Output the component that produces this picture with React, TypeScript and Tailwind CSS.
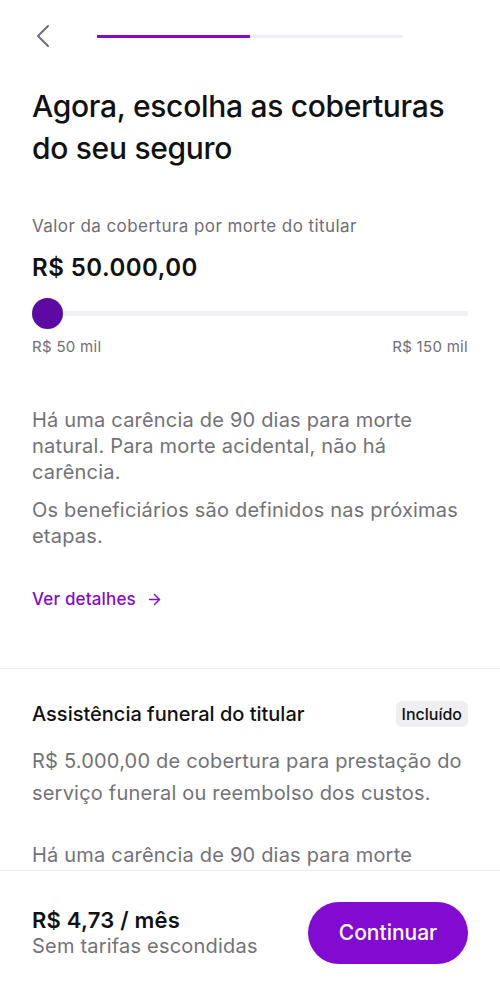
import { ArrowRight, ChevronLeft } from "lucide-react";

const font = { fontFamily: "Inter, 'Noto Sans', sans-serif" };

function Slider() {
  return (
    <div className="relative mt-[15px] h-[31px]">
      <div className="absolute left-[15px] right-0 top-[13px] h-[5px] rounded-full bg-[#f0eff3]" />
      <div className="absolute left-0 top-0 h-[31px] w-[31px] rounded-full bg-[#5c0aa3]" />
    </div>
  );
}

export default function App() {
  return (
    <div className="flex h-[996px] w-[500px] flex-col overflow-hidden bg-white" style={font}>
      <div className="h-[870px] overflow-hidden">
        {/* header */}
        <div className="flex h-[72px] items-center px-[32px]">
          <ChevronLeft className="-ml-[9px] h-[40px] w-[40px] shrink-0 text-[#6e6e78]" strokeWidth={1.2} />
          <div className="ml-[34px] flex h-[3px] w-[306px] bg-[#f1eff5]">
            <div className="h-full w-[153px] bg-[#820ad1]" />
          </div>
        </div>

        <div className="px-[32px]">
          <h1 className="mt-[13px] text-[30px] font-medium leading-[42px] tracking-[-0.01em] text-[#111111]">
            Agora, escolha as coberturas
            <br />
            do seu seguro
          </h1>

          <p className="mt-[45px] text-[17px] leading-[24px] tracking-[0.025em] text-[#6e6e75]">
            Valor da cobertura por morte do titular
          </p>
          <p className="mt-[15px] text-[24px] font-semibold leading-[30px] tracking-[0.02em] text-[#111111]">
            R$ 50.000,00
          </p>

          <Slider />

          <div className="mt-[8px] flex justify-between text-[15px] leading-[20px] tracking-[0.02em] text-[#6e6e75]">
            <span>R$ 50 mil</span>
            <span>R$ 150 mil</span>
          </div>

          <div className="mt-[50px] text-[20px] leading-[26px] tracking-[0.01em] text-[#727278]">
            <p>
              Há uma carência de 90 dias para morte
              <br />
              natural. Para morte acidental, não há
              <br />
              carência.
            </p>
            <p className="mt-[12px]">
              Os beneficiários são definidos nas próximas
              <br />
              etapas.
            </p>
          </div>

          <a className="mt-[38px] flex items-center gap-[10px] text-[17px] font-medium leading-[24px] tracking-[0.01em] text-[#820ad1]">
            Ver detalhes
            <ArrowRight className="h-[17px] w-[17px]" strokeWidth={2} />
          </a>
        </div>

        <div className="mt-[57px] h-px bg-[#eeeef0]" />

        <div className="px-[32px]">
          <div className="mt-[31px] flex h-[28px] items-center justify-between">
            <h2 className="text-[20px] font-medium leading-[28px] text-[#111111]">
              Assistência funeral do titular
            </h2>
            <span className="rounded-[6px] bg-[#efeff2] px-[6px] py-[3px] text-[16px] font-medium leading-[20px] text-[#111111]">
              Incluído
            </span>
          </div>
          <p className="mt-[17px] text-[20px] leading-[32px] tracking-[0.01em] text-[#727278]">
            R$ 5.000,00 de cobertura para prestação do
            <br />
            serviço funeral ou reembolso dos custos.
          </p>
          {/* rest of this paragraph scrolls under the footer */}
          <p className="mt-[30px] text-[20px] leading-[32px] tracking-[0.01em] text-[#727278]">
            Há uma carência de 90 dias para morte
          </p>
        </div>
      </div>

      {/* footer */}
      <div className="flex flex-1 items-start justify-between border-t border-[#eeeef0] px-[32px] pt-[31px]">
        <div className="pt-[4px]">
          <p className="text-[22px] font-semibold leading-[28px] tracking-[0.01em] text-[#111111]">R$ 4,73 / mês</p>
          <p className="text-[20px] leading-[24px] tracking-[0.01em] text-[#727278]">Sem tarifas escondidas</p>
        </div>
        <button className="h-[62px] w-[160px] rounded-full bg-[#820ad1] text-[21px] font-medium text-white">
          Continuar
        </button>
      </div>
    </div>
  );
}
